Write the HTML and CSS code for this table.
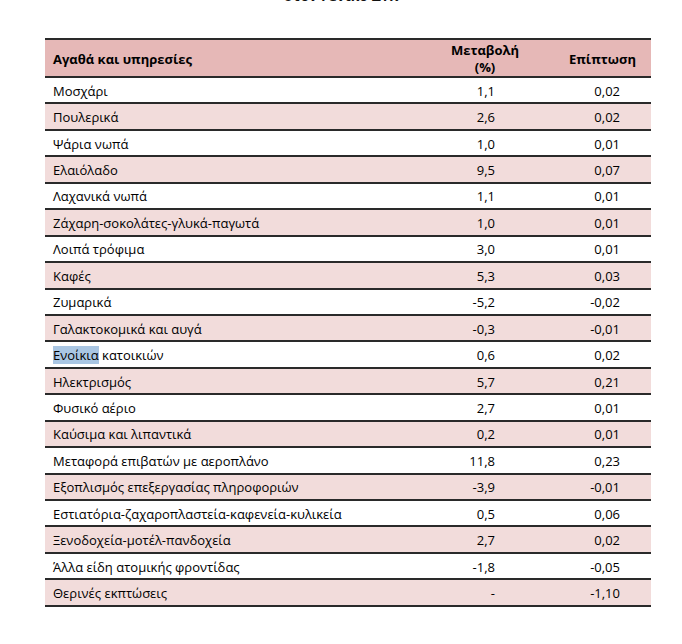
FILE: index.html
```
<!DOCTYPE html>
<html lang="el">
<head>
<meta charset="utf-8">
<link rel="stylesheet" href="styles.css">
</head>
<body>
<h2 class="title">στον Γενικό ΔΤΚ</h2>
<div class="table">
  <div class="row head">
    <div class="c1">Αγαθά και υπηρεσίες</div>
    <div class="c2">Μεταβολή<br>(%)</div>
    <div class="c3">Επίπτωση</div>
  </div>
  <div class="row"><div class="c1">Μοσχάρι</div><div class="c2">1,1</div><div class="c3">0,02</div></div>
  <div class="row alt"><div class="c1">Πουλερικά</div><div class="c2">2,6</div><div class="c3">0,02</div></div>
  <div class="row"><div class="c1">Ψάρια νωπά</div><div class="c2">1,0</div><div class="c3">0,01</div></div>
  <div class="row alt"><div class="c1">Ελαιόλαδο</div><div class="c2">9,5</div><div class="c3">0,07</div></div>
  <div class="row"><div class="c1">Λαχανικά νωπά</div><div class="c2">1,1</div><div class="c3">0,01</div></div>
  <div class="row alt"><div class="c1">Ζάχαρη-σοκολάτες-γλυκά-παγωτά</div><div class="c2">1,0</div><div class="c3">0,01</div></div>
  <div class="row"><div class="c1">Λοιπά τρόφιμα</div><div class="c2">3,0</div><div class="c3">0,01</div></div>
  <div class="row alt"><div class="c1">Καφές</div><div class="c2">5,3</div><div class="c3">0,03</div></div>
  <div class="row"><div class="c1">Ζυμαρικά</div><div class="c2">-5,2</div><div class="c3">-0,02</div></div>
  <div class="row alt"><div class="c1">Γαλακτοκομικά και αυγά</div><div class="c2">-0,3</div><div class="c3">-0,01</div></div>
  <div class="row"><div class="c1"><span class="sel">Ενοίκια</span> κατοικιών</div><div class="c2">0,6</div><div class="c3">0,02</div></div>
  <div class="row alt"><div class="c1">Ηλεκτρισμός</div><div class="c2">5,7</div><div class="c3">0,21</div></div>
  <div class="row"><div class="c1">Φυσικό αέριο</div><div class="c2">2,7</div><div class="c3">0,01</div></div>
  <div class="row alt"><div class="c1">Καύσιμα και λιπαντικά</div><div class="c2">0,2</div><div class="c3">0,01</div></div>
  <div class="row"><div class="c1">Μεταφορά επιβατών με αεροπλάνο</div><div class="c2">11,8</div><div class="c3">0,23</div></div>
  <div class="row alt"><div class="c1">Εξοπλισμός επεξεργασίας πληροφοριών</div><div class="c2">-3,9</div><div class="c3">-0,01</div></div>
  <div class="row"><div class="c1">Εστιατόρια-ζαχαροπλαστεία-καφενεία-κυλικεία</div><div class="c2">0,5</div><div class="c3">0,06</div></div>
  <div class="row alt"><div class="c1">Ξενοδοχεία-μοτέλ-πανδοχεία</div><div class="c2">2,7</div><div class="c3">0,02</div></div>
  <div class="row"><div class="c1">Άλλα είδη ατομικής φροντίδας</div><div class="c2">-1,8</div><div class="c3">-0,05</div></div>
  <div class="row alt"><div class="c1">Θερινές εκπτώσεις</div><div class="c2">-</div><div class="c3">-1,10</div></div>
</div>
</body>
</html>
```
FILE: styles.css
```
html, body {
  margin: 0;
  padding: 0;
  background: #fff;
}
body {
  display: flow-root;
  font-family: "Open Sans", "Noto Sans", sans-serif;
  font-size: 13px;
  color: #000;
  width: 682px;
  height: 644px;
  overflow: hidden;
}
.title {
  margin: -12px 0 0 0;
  height: 16px;
  text-align: center;
  font-size: 14px;
  font-weight: 700;
  line-height: 16px;
  color: #111;
}
.table {
  margin: 34px 0 0 45px;
  width: 606px;
  border-top: 2px solid #2a2a2a;
}
.row {
  display: grid;
  grid-template-columns: 390px 100px 116px;
  height: 26.45px;
  box-sizing: border-box;
  border-bottom: 2px solid #2a2a2a;
  align-items: center;
  padding-top: 1px;
}
.row.alt {
  background: #f2dcdb;
}
.row.head {
  height: 38px;
  background: #e6b8b7;
  font-weight: 700;
  line-height: 17px;
  padding-top: 2px;
}
.c1 {
  padding-left: 8px;
  white-space: nowrap;
}
.c2 {
  text-align: right;
  padding-right: 40px;
}
.c3 {
  text-align: right;
  padding-right: 31px;
}
.head .c2 {
  text-align: center;
  padding-right: 0;
}
.head .c3 {
  padding-right: 15px;
}
.sel {
  background: #a9c6e3;
}
```
